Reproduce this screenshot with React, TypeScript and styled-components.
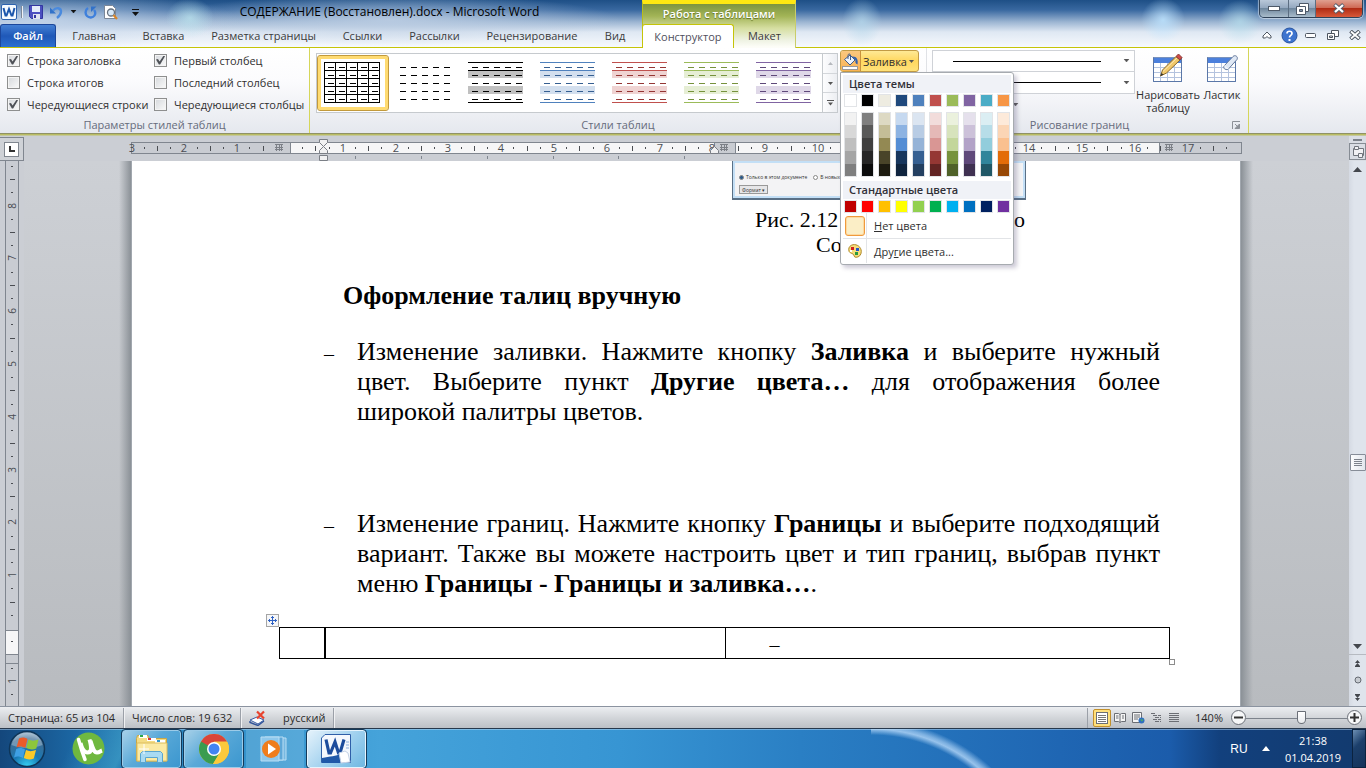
import React from 'react';
import styled, { createGlobalStyle, css } from 'styled-components';

const ui = `"Open Sans", "Noto Sans", sans-serif`;
const serif = `"Liberation Serif", "Times New Roman", serif`;

const Global = createGlobalStyle`
  *, *::before, *::after { box-sizing: border-box; }
  body { margin: 0; font-family: ${ui}; font-size: 11px; color: #303030; }
  button, input, select { font: inherit; color: inherit; margin: 0; padding: 0; border: 0; background: none; }
  svg { display: block; flex: none; }
`;

const App_ = styled.div`
  display: flex;
  flex-direction: column;
  min-height: 100vh;
`;

/* ---------- header ---------- */

const Header = styled.header`
  display: flex;
  height: 48px;
  box-shadow: inset 0 -1px 0 #c5c408;
  background:
    radial-gradient(ellipse 22px 22px at 1163px 20px, rgba(190, 228, 255, 0.85), transparent),
    radial-gradient(ellipse 22px 22px at 1240px 22px, rgba(180, 220, 235, 0.75), transparent),
    radial-gradient(ellipse 20px 24px at 862px 22px, rgba(180, 215, 235, 0.75), transparent),
    radial-gradient(ellipse 24px 20px at 190px 18px, rgba(190, 232, 240, 0.7), transparent),
    radial-gradient(ellipse 230px 26px at 390px 20px, rgba(190, 207, 228, 0.85), transparent),
    radial-gradient(ellipse 200px 30px at 40px 20px, rgba(200, 216, 236, 0.85), transparent),
    linear-gradient(#1e4f86 0, #3968a0 10px, #9cb5d2 22px, #dfe8f3 32px, #f6f9fd 47px);
`;

const HeaderLeft = styled.div`
  width: 642px;
  flex: none;
`;

const TitleRow = styled.div`
  display: flex;
  height: 24px;
`;

const QuickAccess = styled.div`
  display: flex;
  align-items: center;
  gap: 7px;
  width: 137px;
  padding-left: 1px;
`;

const AppMark = styled.span`
  display: flex;
  align-items: center;
  gap: 4px;
`;

const IconButton = styled.button`
  display: flex;
  align-items: center;
  justify-content: center;
`;

const Divider = styled.span`
  width: 1px;
  height: 12px;
  background: #7c8797;
  box-shadow: 1px 0 0 #eef1f5;
`;

const Title = styled.h1`
  flex: 1;
  margin: 0;
  font-size: 12px;
  font-weight: 400;
  line-height: 24px;
  text-align: center;
  color: #000;
`;

const TabRow = styled.nav`
  display: flex;
  height: 23px;
`;

const FileTab = styled.button`
  width: 56px;
  margin-right: 3px;
  border: 1px solid #1c479b;
  border-bottom: 0;
  border-radius: 3px 3px 0 0;
  background: linear-gradient(#4480d4, #1f58b8 50%, #2c6fd0);
  color: #fff;
  font-weight: 600;
  line-height: 22px;
`;

const Tab = styled.button<{ $w: number }>`
  width: ${p => p.$w}px;
  line-height: 24px;
  white-space: nowrap;
  color: #3b3b3b;
`;

const Context = styled.div`
  width: 154px;
  flex: none;
  border-left: 1px solid #b9bd1a;
  border-right: 1px solid #c9cd6a;
  border-top: 4px solid #ffe812;
  background: linear-gradient(#7d9440, #a2b456 12px, #d5dea0 24px, #eef2e2 36px, #fdfdf8 43px);
  background-clip: padding-box;
`;

const ContextTitle = styled.div`
  height: 20px;
  line-height: 20px;
  text-align: center;
  font-weight: 600;
  color: #fff;
  text-shadow: 0 1px 1px #5c6e20;
`;

const ContextTabs = styled.div`
  display: flex;
  height: 24px;
  margin-left: -1px;
`;

const ActiveTab = styled.button`
  width: 93px;
  border: 1px solid #c5c408;
  border-bottom: 0;
  border-radius: 3px 3px 0 0;
  background: #fff;
  line-height: 22px;
  color: #50505c;
`;

const HeaderRight = styled.div`
  flex: 1;
  display: flex;
  flex-direction: column;
  align-items: flex-end;
`;

const WindowButtons = styled.div`
  display: flex;
  height: 18px;
  margin-right: 3px;
  border: 1px solid #2f4258;
  border-top: 0;
  border-radius: 0 0 5px 5px;
  box-shadow: 0 0 1px 1px rgba(255, 255, 255, 0.5);
  overflow: hidden;
`;

const WinButton = styled(IconButton)<{ $w: number; $close?: boolean }>`
  width: ${p => p.$w}px;
  border-right: ${p => (p.$close ? 0 : 1)}px solid #5c6e82;
  background: ${p =>
    p.$close
      ? 'linear-gradient(#e0a08f, #cf6a55 45%, #b02c14 50%, #d8593a)'
      : 'linear-gradient(#b9c8d9, #95a9c0 45%, #70889f 50%, #a9bccb)'};
`;

const HelpRow = styled.div`
  display: flex;
  align-items: center;
  height: 30px;
  padding-top: 4px;
`;

const HelpItem = styled(IconButton)`
  width: 22px;
`;

/* ---------- ribbon ---------- */

const Ribbon = styled.section`
  display: flex;
  height: 86px;
  margin-bottom: 2px;
  background: linear-gradient(#fff, #fbfbfd 40%, #e5e8ee);
  border-bottom: 1px solid #909266;
  box-shadow: 0 1px 0 #b9bc62, 0 2px 0 #c4c79c;
`;

const Group = styled.div<{ $w: number; $accent?: boolean }>`
  display: flex;
  flex-direction: column;
  flex: none;
  width: ${p => p.$w}px;
  border-right: 1px solid ${p => (p.$accent ? '#d5d65a' : '#e0e2e6')};
`;

const GroupBody = styled.div`
  display: flex;
  height: 69px;
`;

const GroupLabel = styled.div`
  display: flex;
  align-items: center;
  height: 16px;
  line-height: 16px;
  color: #666b7c;
  span { flex: 1; text-align: center; }
`;

const Options = styled.div`
  display: grid;
  grid-template-columns: 147px 1fr;
  grid-auto-rows: 22px;
  padding: 1px 0 0 7px;
`;

const Check = styled.label`
  display: flex;
  align-items: center;
  gap: 7px;
  white-space: nowrap;
  input {
    appearance: none;
    display: grid;
    place-items: center;
    width: 13px;
    height: 13px;
    border: 1px solid #8e8f8f;
    background: linear-gradient(135deg, #d5d8dc, #fafafa);
    box-shadow: inset 0 0 0 1px #f4f4f4;
  }
  input:checked::before {
    content: '';
    width: 9px;
    height: 9px;
    background: #4f5258;
    clip-path: polygon(0 45%, 22% 38%, 40% 66%, 85% 0, 100% 8%, 46% 100%, 32% 100%);
  }
`;

const Gallery = styled.div`
  display: flex;
  height: 60px;
  margin: 5px 0 0 6px;
  border: 1px solid #c6cace;
  background: #fff;
`;

const StyleItem = styled.button<{ $on?: boolean }>`
  width: 72px;
  height: 56px;
  margin-top: 1px;
  padding-left: 7px;
  display: grid;
  align-items: center;
  border-radius: 3px;
  ${p =>
    p.$on &&
    css`
      padding-left: 6px;
      border: 1px solid #c29a3c;
      box-shadow: inset 0 0 0 3px #ffdb72;
    `}
`;

const GalleryScroll = styled.div`
  display: flex;
  flex-direction: column;
  width: 15px;
  margin-left: 1px;
  border-left: 1px solid #c6cace;
`;

const GalleryArrow = styled(IconButton)`
  flex: 1;
  background: linear-gradient(90deg, #fdfdfe, #eceef2);
  & + & { border-top: 1px solid #d3d6da; }
`;

const ShadingWrap = styled.div`
  position: relative;
  margin: 2px 0 0 2px;
  height: 22px;
`;

const ShadingButton = styled.button`
  display: flex;
  align-items: center;
  width: 79px;
  height: 22px;
  border: 1px solid #c29b45;
  border-radius: 3px;
  background: linear-gradient(#ffe995, #ffd75f 50%, #ffe27a);
  overflow: hidden;
`;

const ShadingIcon = styled.span`
  display: grid;
  place-items: center;
  width: 20px;
  height: 20px;
  border-right: 1px solid #c9923d;
  background: linear-gradient(#fbc77e, #f9b354);
`;

const ShadingText = styled.span`
  width: 48px;
  white-space: nowrap;
  text-align: center;
`;

const Menu = styled.div`
  position: absolute;
  z-index: 5;
  top: 22px;
  left: 0;
  width: 174px;
  padding: 2px 2px 1px;
  border: 1px solid #a7abb0;
  border-radius: 0 3px 3px 3px;
  background: #fff;
  box-shadow: 3px 3px 4px rgba(90, 80, 120, 0.3);
`;

const MenuHeading = styled.div`
  height: 18px;
  padding-left: 6px;
  background: #f0f2f7;
  font-weight: 600;
  line-height: 18px;
  color: #303038;
`;

const Swatches = styled.div`
  display: flex;
  gap: 4px;
  padding: 1px 0 0 1px;
`;

const Ramps = styled(Swatches)`
  padding: 5px 0 4px 1px;
`;

const Ramp = styled.div`
  border: 1px solid #e2e4e7;
`;

const Swatch = styled.button<{ $c: string; $inRamp?: boolean }>`
  display: block;
  width: ${p => (p.$inRamp ? 11 : 13)}px;
  height: 13px;
  border: ${p => (p.$inRamp ? 0 : 1)}px solid #e2e4e7;
  background: ${p => p.$c};
  &:first-child, &:last-child { height: ${p => (p.$inRamp ? 12 : 13)}px; }
`;

const MenuItem = styled.button`
  display: flex;
  align-items: center;
  width: 100%;
  height: 25px;
  text-align: left;
  & + & { border-top: 1px solid #e2e4e7; }
`;

const MenuIcon = styled.span`
  display: grid;
  place-items: center;
  align-self: stretch;
  width: 24px;
  margin-right: 7px;
  border-right: 1px solid #e2e4e7;
`;

const NoColor = styled.span`
  width: 20px;
  height: 20px;
  border: 1px solid #ef9a3c;
  border-radius: 3px;
  background: #fbeec6;
  box-shadow: inset 0 0 0 1px #fcd9a0;
`;

const BorderCol = styled.div`
  display: flex;
  flex-direction: column;
  width: 203px;
  margin: 2px 0 0 5px;
`;

const LineBox = styled.div`
  display: grid;
  align-items: center;
  height: 22px;
  border: 1px solid #cfd2d7;
  background: #fff;
  & + & { border-top: 0; }
  > * { grid-area: 1 / 1; }
  > svg { justify-self: end; margin-right: 4px; pointer-events: none; }
`;

const LineSelect = styled.select`
  appearance: none;
  width: 100%;
  height: 20px;
`;

const LineSample = styled.span`
  justify-self: start;
  width: 148px;
  height: 1px;
  margin-left: 20px;
  background: #000;
  pointer-events: none;
`;

const PenColor = styled.div`
  padding: 9px 0 0 80px;
`;

const BigButton = styled.button<{ $w: number }>`
  display: flex;
  flex-direction: column;
  align-items: center;
  align-self: flex-start;
  width: ${p => p.$w}px;
  padding-top: 6px;
  line-height: 13px;
  svg { margin-bottom: 6px; }
`;

/* ---------- workspace ---------- */

const Workspace = styled.main`
  flex: 1;
  display: grid;
  grid-template-columns: 24px 1fr 17px;
  grid-template-rows: 25px 1fr;
  background: #cbced4;
`;

const Corner = styled.button`
  display: grid;
  place-items: center;
  border: 1px solid #80868f;
  border-left: 0;
  margin: 1px 0 0;
  background: #cfd2d7;
  span {
    display: grid;
    place-items: center;
    width: 15px;
    height: 15px;
    border: 1px solid #80868f;
    background: #fff;
  }
`;

const HRulerCell = styled.div`
  padding-left: 107px;
  overflow: hidden;
  svg { overflow: visible; }
`;

const VRulerCell = styled.div`
  padding-left: 5px;
  overflow: hidden;
`;

const Desk = styled.div`
  display: flex;
  padding: 0 109px 0 108px;
  background: linear-gradient(#cdd0d5, #b8bbbf);
`;

const Page = styled.article`
  position: relative;
  flex: 1;
  padding: 0 80px 0 192px;
  background: #fff;
  font-family: ${serif};
  font-size: 26px;
  line-height: 30px;
  color: #000;
  box-shadow: -1px 0 0 #a1a7ae, 1px 0 0 #a1a7ae;
  &::before, &::after {
    content: '';
    position: absolute;
    top: 0;
    bottom: 0;
    width: 12px;
  }
  &::before { right: calc(100% + 1px); background: linear-gradient(90deg, transparent, #8b9197); }
  &::after { left: calc(100% + 1px); background: linear-gradient(270deg, transparent, #8b9197); }
`;

const Figure = styled.div`
  display: flex;
  flex-direction: column;
  gap: 4px;
  width: 294px;
  height: 39px;
  margin-left: 408px;
  padding: 12px 0 0 6px;
  border: solid #5a7086;
  border-width: 0 1px 2px 1px;
  box-shadow: inset 0 0 0 2px #c3dff6;
  background: #f3f3f5;
  font-family: ${ui};
  font-size: 5px;
  line-height: 8px;
  color: #333;
`;

const FigureRow = styled.div`
  display: flex;
  gap: 6px;
  label { display: flex; align-items: center; gap: 2px; white-space: nowrap; }
  input { appearance: none; width: 5px; height: 5px; border: 1px solid #888; border-radius: 50%; background: #fff; }
  input:checked { background: #2a5a8a; }
`;

const FigureButton = styled.button`
  width: 29px;
  height: 9px;
  border: 1px solid #999;
  background: #e6e6e8;
  line-height: 6px;
  white-space: nowrap;
`;

const Caption = styled.p<{ $indent: number }>`
  display: flex;
  justify-content: space-between;
  width: 270px;
  margin: 0 0 0 431px;
  padding-left: ${p => p.$indent}px;
  font-size: 22px;
  line-height: 25px;
`;

const Captions = styled.div`
  padding-top: 7px;
`;

const Heading = styled.h2`
  margin: 24px 0 26px 19px;
  font-size: 26px;
  line-height: 30px;
`;

const List = styled.ul`
  display: flex;
  flex-direction: column;
  gap: 82px;
  margin: 0;
  padding: 0;
  list-style: none;
`;

const Item = styled.li`
  display: flex;
  &::before {
    content: '–';
    width: 33px;
    flex: none;
    font-size: 20px;
    line-height: 34px;
  }
  p { margin: 0; text-align: justify; }
`;

const TableBox = styled.div`
  position: relative;
  margin: 28px -10px 0 -45px;
`;

const Grid = styled.table`
  width: 100%;
  table-layout: fixed;
  border-collapse: collapse;
  td { height: 30px; padding: 4px 0 0 44px; border: 1px solid #000; font-size: 20px; line-height: 26px; }
  td:first-child { width: 45px; border-right-width: 2px; }
  td:nth-child(2) { width: 400px; }
`;

const MoveHandle = styled.button`
  position: absolute;
  left: -13px;
  top: -13px;
  width: 13px;
  height: 13px;
  border: 1px solid #a5a5a5;
  background: #f5f6f8;
`;

const SizeHandle = styled.span`
  position: absolute;
  right: -5px;
  bottom: -6px;
  width: 6px;
  height: 6px;
  border: 1px solid #8c8c8c;
  background: #fff;
`;

const ScrollTop = styled.div`
  display: flex;
  flex-direction: column;
  align-items: center;
  gap: 2px;
  padding-top: 3px;
  background: #d9dde4;
`;

const SplitBar = styled.span`
  width: 9px;
  height: 2px;
  background: #7c828b;
`;

const RulerToggle = styled(IconButton)`
  width: 17px;
  height: 17px;
  border: 1px solid #868c94;
`;

const ScrollBar = styled.div`
  display: flex;
  flex-direction: column;
  align-items: center;
  background: linear-gradient(90deg, #d5dae3, #dfe4ec 30%, #dfe4ec);
`;

const ScrollArrow = styled(IconButton)<{ $h: number; $line?: boolean }>`
  width: 17px;
  height: ${p => p.$h}px;
  border-top: ${p => (p.$line ? 1 : 0)}px solid #b6bac1;
`;

const Track = styled.div<{ $grow: number }>`
  flex: ${p => p.$grow} 1 0;
`;

const Thumb = styled(IconButton)`
  width: 16px;
  height: 17px;
  border: 1px solid #878d98;
  border-radius: 1px;
  background: linear-gradient(90deg, #fdfdfe, #e2e6ed);
`;

/* ---------- status bar ---------- */

const Status = styled.footer`
  display: flex;
  align-items: center;
  height: 22px;
  border-top: 1px solid #8b93a0;
  background: linear-gradient(#eceef1, #d3d6da 50%, #bcc0c6);
  color: #2b2b2b;
`;

const StatusCell = styled.button<{ $w: number }>`
  display: flex;
  align-items: center;
  gap: 17px;
  width: ${p => p.$w}px;
  height: 20px;
  padding-left: 8px;
  border-right: 1px solid #9ba0a8;
  box-shadow: 1px 0 0 #f0f1f3;
  white-space: nowrap;
`;

const StatusRight = styled.div`
  display: flex;
  align-items: center;
  height: 20px;
  margin-left: auto;
  padding: 0 4px 0 5px;
  border-left: 1px solid #9ba0a8;
`;

const ViewButton = styled(IconButton)<{ $on?: boolean }>`
  width: 18px;
  height: 18px;
  ${p =>
    p.$on &&
    css`
      border: 1px solid #c2902c;
      border-radius: 2px;
      background: #ffe07c;
    `}
`;

const ZoomLabel = styled.button`
  width: 28px;
  margin: 0 8px 0 12px;
`;

const RoundButton = styled(IconButton)`
  width: 15px;
  height: 15px;
  border: 1px solid #6a6f77;
  border-radius: 50%;
  background: #f6f7f8;
`;

const ZoomRange = styled.input`
  appearance: none;
  width: 101px;
  height: 14px;
  background: linear-gradient(#7d838c, #7d838c) 0 7px / 100% 1px no-repeat;
  &::-webkit-slider-thumb {
    appearance: none;
    width: 9px;
    height: 13px;
    background: linear-gradient(#fff, #e9ebee);
    border: 1px solid #6a6f77;
    border-radius: 1px 1px 5px 5px;
  }
`;

/* ---------- taskbar ---------- */

const Taskbar = styled.footer`
  display: flex;
  align-items: center;
  height: 40px;
  border-top: 1px solid #27384c;
  box-shadow: inset 0 1px 0 rgba(190, 220, 245, 0.5);
  background:
    radial-gradient(circle at 0 168px, transparent 162px, rgba(180, 215, 248, 0.8) 168px, rgba(180, 215, 248, 0.6) 171px, transparent 177px) 871px 0 / 180px 40px no-repeat,
    linear-gradient(115deg, transparent 70px, rgba(90, 200, 220, 0.35) 120px, transparent 130px),
    linear-gradient(90deg, #14477c, #1c69a6 80px, #2f8cc6 200px, #45a3da 380px, #3795d3 620px, #2a7fc4 800px, #1f66b3 1060px, #1b5cab 1170px, #12407d 1220px, #123a6e 1366px);
`;

const Orb = styled(IconButton)`
  width: 57px;
  padding-right: 3px;
`;

const TaskButton = styled(IconButton)<{ $w: number; $mode: 'idle' | 'open' | 'active' | 'plain' }>`
  width: ${p => p.$w}px;
  height: 38px;
  margin-right: 3px;
  ${p =>
    (p.$mode === 'open' || p.$mode === 'active') &&
    css`
      border: 1px solid ${p.$mode === 'active' ? '#e6f4fd' : '#9ccbe8'};
      border-radius: 3px;
      outline: 1px solid #143a5a;
      background: ${p.$mode === 'active'
        ? 'linear-gradient(135deg, #e4f2fb, #9fd0ee 55%, #6fb8e2)'
        : 'linear-gradient(135deg, #a6d0e8, #5aa9d8 45%, #3c97cf)'};
    `}
  ${p => p.$mode === 'idle' && css`background: rgba(150, 205, 235, 0.3);`}
`;

const Tray = styled.div`
  display: flex;
  align-items: center;
  align-self: stretch;
  margin-left: auto;
  color: #fff;
`;

const Lang = styled.button`
  width: 38px;
  font-family: "Liberation Sans", sans-serif;
  font-size: 12px;
`;

const Clock = styled.button`
  width: 78px;
  line-height: 17px;
  text-align: center;
`;

const ShowDesktop = styled.button`
  align-self: stretch;
  width: 14px;
  border: 1px solid #0b2340;
  background: linear-gradient(135deg, #6d8fb3, #1c3f6b 40%, #14325a);
`;

/* ---------- drawings ---------- */

const Down = ({ c = '#555' }: { c?: string }) => (
  <svg width="7" height="4"><path d="M1 0h5L3.500 3z" fill={c} stroke={c} strokeWidth=".5" /></svg>
);

const WordSmall = () => (
  <svg width="16" height="16" viewBox="0 0 16 16">
    <rect x=".5" y=".5" width="15" height="15" rx="1.500" fill="#f5faff" stroke="#2c62ae" />
    <path d="M2.500 4l2 7.500h1L8 5l2.500 6.500h1l2-7.500" fill="none" stroke="#1b56ac" strokeWidth="2" />
  </svg>
);

const SaveIcon = () => (
  <svg width="14" height="14" viewBox="0 0 14 14">
    <path d="M.5.5h13v13h-11l-2-2z" fill="#4b4fc0" stroke="#3236a0" />
    <rect x="3" y="1" width="8" height="6" fill="#e3ecfa" />
    <rect x="4" y="9" width="7" height="5" fill="#dfe3f0" />
    <rect x="5" y="10" width="2" height="3" fill="#3236a0" />
  </svg>
);

const UndoIcon = () => (
  <svg width="13" height="13" viewBox="0 0 13 13">
    <path d="M0 1.500v6h6z" fill="#3272c9" />
    <path d="M3 4.500C6 1 11 1.500 11 5.500c0 3-1.500 4.500-4 6.500" fill="none" stroke="#4a8ade" strokeWidth="2.400" />
  </svg>
);

const RedoIcon = () => (
  <svg width="13" height="13" viewBox="0 0 13 13">
    <path d="M4 2C1 4 1 8 3 10s6 2 7.500-.5.800-4-.5-5.500" fill="none" stroke="#3f80dc" strokeWidth="2.400" />
    <path d="M12.500 .5H7v5.500z" fill="#3272c9" />
  </svg>
);

const PreviewIcon = () => (
  <svg width="14" height="15" viewBox="0 0 14 15">
    <path d="M.5.5h8l3 3v10H.5z" fill="#fff" stroke="#7b8798" />
    <circle cx="7" cy="7.500" r="3.500" fill="#d6e8f8" stroke="#66717f" strokeWidth="1.300" />
    <path d="M9.500 10l3.500 4" stroke="#d8862a" strokeWidth="2.200" />
  </svg>
);

const BucketIcon = () => (
  <svg width="17" height="17" viewBox="0 0 17 17">
    <path d="M2.500 6.500l5.500-4.500 5 5-5 5z" fill="#eef4fc" stroke="#3f5b8a" />
    <path d="M6 6V2.500C6 .5 8.500.5 8.500 2.500V7" fill="none" stroke="#3f5b8a" />
    <path d="M10 3.500c4.500-.5 6.500 3 5.500 8-2-1-2.500-2.500-2-4.500z" fill="#2f5fae" />
    <rect x=".5" y="13.500" width="15" height="3" fill="#fff" stroke="#9a9a9a" />
  </svg>
);

const PaletteIcon = () => (
  <svg width="14" height="14" viewBox="0 0 14 14">
    <path d="M5 .7C9 0 13.300 3 13.300 7.500 13.300 11 11 13.300 8 13.300c-2.500 0-1.500-2.500-3-3.300S.7 9 .7 5.500C.7 3 2.500 1.200 5 .7z" fill="#f6dd7c" stroke="#b08a2c" />
    <rect x="3" y="3" width="3" height="3" fill="#d02020" />
    <rect x="8" y="4" width="3" height="3" fill="#2456c8" />
    <rect x="7" y="8" width="3" height="3" fill="#2a9a3a" />
    <rect x="2" y="6" width="2" height="2" fill="#fff" />
  </svg>
);

const TableBase = () => (
  <>
    <rect x=".5" y="3.500" width="28" height="24" fill="#fff" stroke="#7a93bd" />
    <rect x="1" y="4" width="27" height="5" fill="#4c80dc" />
    <path d="M1 13.500h27M1 18.500h27M1 23.500h27M7.500 9v18M14.500 9v18M21.500 9v18" stroke="#b4c3de" />
    <path d="M.5 3.500v24h28v-24" fill="none" stroke="#5a77a8" />
  </>
);

const DrawTableIcon = () => (
  <svg width="30" height="28" viewBox="0 0 30 28">
    <TableBase />
    <path d="M7.500 22l2-6L23 2.500l4 3.500-13.500 13z" fill="#f2c96b" stroke="#8a6a2c" />
    <path d="M23 2.500L25.500 0l3.500 3.500-2 2.500z" fill="#cf4a44" stroke="#8c3d38" />
    <path d="M7.500 22l1-3 2 1.500z" fill="#333" />
    <path d="M10 17.500L24 4" stroke="#fbe9b6" />
  </svg>
);

const EraserIcon = () => (
  <svg width="31" height="28" viewBox="0 0 31 28">
    <TableBase />
    <path d="M17 12l9-9.500c2-2 5.500 0 4 3L21 15.500c-3 .5-5-1-4-3.500z" fill="#dfe8f5" stroke="#62779a" />
    <path d="M17.500 11.500c1 2 2 3 4 3.500" fill="none" stroke="#fff" />
  </svg>
);

type ThumbStyle = { kind: 'grid' | 'plain' | 'band'; line: string; band: string; dash: string };

const styleThumbs: ThumbStyle[] = [
  { kind: 'grid', line: '#000', band: '', dash: '#000' },
  { kind: 'plain', line: '', band: '', dash: '#000' },
  { kind: 'band', line: '#000', band: '#c0c0c0', dash: '#000' },
  { kind: 'band', line: '#4f81bd', band: '#d3dfee', dash: '#365f91' },
  { kind: 'band', line: '#c0504d', band: '#efd3d2', dash: '#943634' },
  { kind: 'band', line: '#9bbb59', band: '#e6eed5', dash: '#76923c' },
  { kind: 'band', line: '#8064a2', band: '#dfd8e8', dash: '#5f497a' },
];

const five = [0, 1, 2, 3, 4];

const StyleThumb = ({ t }: { t: ThumbStyle }) => (
  <svg width="56" height="42" shapeRendering="crispEdges">
    {t.kind === 'band' && (
      <>
        <rect y="9" width="55" height="7" fill={t.band} />
        <rect y="24" width="55" height="8" fill={t.band} />
        {[0, 8, 40].map(y => <rect key={y} y={y} width="55" height="1" fill={t.line} />)}
      </>
    )}
    {t.kind === 'grid' &&
      [0, 1, 2, 3, 4, 5].map(i => (
        <React.Fragment key={i}>
          <rect x={i * 11} width="1" height="41" fill={t.line} />
          <rect y={i * 8} width="56" height="1" fill={t.line} />
        </React.Fragment>
      ))}
    {five.map(r => five.map(c => <rect key={`${r}${c}`} x={4 + c * 11} y={5 + r * 8} width="6" height="1" fill={t.dash} />))}
  </svg>
);

const TICK = 13.2;

const HashMark = ({ x }: { x: number }) => (
  <path d={`M${x} 8.500h8M${x} 11.500h8M${x} 13.500h8M${x + 1.5} 8v7M${x + 4.500} 8v7M${x + 6.500} 8v7`} stroke="#7c8087" />
);

const HorizontalRuler = () => {
  const origin = 159;
  const marks = [];
  for (let q = -12; q <= 71; q++) {
    const x = Math.round(origin + q * TICK);
    if (q === 0 || q === -1 || (x > 585 && x < 603) || (x > 1030 && x < 1046) || x > 1105) continue;
    if (q % 4 === 0) {
      marks.push(
        <text key={q} x={x} y="16" textAnchor="middle" fontSize="11" fontFamily={ui} fill="#4a4d52">{Math.abs(q / 4)}</text>,
      );
    } else {
      const half = q % 2 === 0;
      marks.push(<rect key={q} x={x - 1} y={half ? 10 : 11} width="1" height={half ? 5 : 2} fill="#4a4d52" />);
    }
  }
  return (
    <svg width="1112" height="25" shapeRendering="crispEdges">
      <rect x=".5" y="6.500" width="1110" height="11" fill="#c9ccd2" stroke="#80868f" />
      <rect x="160" y="7" width="424" height="10" fill="#f6f6f7" />
      <rect x="605" y="7" width="424" height="10" fill="#f6f6f7" />
      <path d="M159.500 6v12M583.500 6v12M604.500 6v12M1028.500 6v12" stroke="#80868f" />
      {marks}
      <HashMark x={144} />
      <HashMark x={589} />
      <HashMark x={1034} />
      {[224, 290, 356, 422, 487, 553].map(x => <rect key={x} x={x} y="20" width="1" height="3" fill="#80868f" />)}
      <g shapeRendering="auto" fill="#f1f1f2" stroke="#7b7f86">
        <path d="M188.500 3.500h8v3l-4 4-4-4z" />
        <path d="M192.500 10.500l4 4v3h-8v-3z" />
        <path d="M188.500 19.500h8v5h-8z" />
        <path d="M583.500 10.500l4 4v3h-8v-3z" />
      </g>
    </svg>
  );
};

const VerticalRuler = () => {
  const origin = 467;
  const marks = [];
  for (let q = -35; q <= 5; q++) {
    const y = Math.round(origin + q * TICK);
    if (q === 0 || q === 2) continue;
    if (q % 4 === 0) {
      marks.push(
        <text key={q} transform={`translate(11 ${y}) rotate(-90)`} textAnchor="middle" fontSize="10" fontFamily={ui} fill="#4a4d52">
          {Math.abs(q / 4)}
        </text>,
      );
    } else {
      const half = q % 2 === 0;
      marks.push(<rect key={q} x={half ? 5 : 6} y={y} width={half ? 5 : 2} height="1" fill="#4a4d52" />);
    }
  }
  return (
    <svg width="14" height="545" shapeRendering="crispEdges">
      <rect width="14" height="545" fill="#c9ccd2" />
      <rect y="470" width="14" height="24" fill="#f6f6f7" />
      <path d="M.5 0v545M13.500 0v545M0 469.500h14M0 493.500h14M0 502.500h14" stroke="#80868f" />
      {marks}
    </svg>
  );
};

/* ---------- data ---------- */

const tabs: [string, number][] = [
  ['Главная', 70], ['Вставка', 69], ['Разметка страницы', 131], ['Ссылки', 67],
  ['Рассылки', 77], ['Рецензирование', 118], ['Вид', 48],
];

const options: [string, boolean][] = [
  ['Строка заголовка', true], ['Первый столбец', true],
  ['Строка итогов', false], ['Последний столбец', false],
  ['Чередующиеся строки', true], ['Чередующиеся столбцы', false],
];

const theme = ['#ffffff', '#000000', '#eeece1', '#1f497d', '#4f81bd', '#c0504d', '#9bbb59', '#8064a2', '#4bacc6', '#f79646'];
const ramps = [
  ['#f2f2f2', '#d8d8d8', '#bfbfbf', '#a5a5a5', '#7f7f7f'],
  ['#7f7f7f', '#595959', '#3f3f3f', '#262626', '#0c0c0c'],
  ['#ddd9c3', '#c4bd97', '#938953', '#494429', '#1d1b10'],
  ['#c6d9f0', '#8db3e2', '#548dd4', '#17365d', '#0f243e'],
  ['#dbe5f1', '#b8cce4', '#95b3d7', '#366092', '#244061'],
  ['#f2dcdb', '#e5b9b7', '#d99694', '#953734', '#632423'],
  ['#ebf1dd', '#d7e3bc', '#c3d69b', '#76923c', '#4f6128'],
  ['#e5e0ec', '#ccc1d9', '#b2a2c7', '#5f497a', '#3f3151'],
  ['#dbeef3', '#b7dde8', '#92cddc', '#31859b', '#205867'],
  ['#fdeada', '#fbd5b5', '#fac08f', '#e36c09', '#974806'],
];
const standard = ['#c00000', '#ff0000', '#ffc000', '#ffff00', '#92d050', '#00b050', '#00b0f0', '#0070c0', '#002060', '#7030a0'];

/* ---------- sections ---------- */

const WindowHeader = () => (
  <Header>
    <HeaderLeft>
      <TitleRow>
        <QuickAccess>
          <AppMark><WordSmall /><Divider /></AppMark>
          <IconButton aria-label="Сохранить"><SaveIcon /></IconButton>
          <IconButton aria-label="Отменить"><UndoIcon /></IconButton>
          <Down c="#111" />
          <IconButton aria-label="Повторить"><RedoIcon /></IconButton>
          <IconButton aria-label="Просмотр"><PreviewIcon /></IconButton>
          <Divider />
          <IconButton aria-label="Настройка панели">
            <svg width="7" height="7"><path d="M0 .5h7" stroke="#111" /><path d="M0 3h7L3.500 7z" fill="#111" /></svg>
          </IconButton>
        </QuickAccess>
        <Title>СОДЕРЖАНИЕ (Восстановлен).docx - Microsoft Word</Title>
      </TitleRow>
      <TabRow>
        <FileTab>Файл</FileTab>
        {tabs.map(([name, w]) => <Tab key={name} $w={w}>{name}</Tab>)}
      </TabRow>
    </HeaderLeft>
    <Context>
      <ContextTitle>Работа с таблицами</ContextTitle>
      <ContextTabs>
        <ActiveTab>Конструктор</ActiveTab>
        <Tab $w={62}>Макет</Tab>
      </ContextTabs>
    </Context>
    <HeaderRight>
      <WindowButtons>
        <WinButton $w={29} aria-label="Свернуть">
          <svg width="12" height="5"><rect x=".5" y=".5" width="11" height="4" fill="#fff" stroke="#4d5968" /></svg>
        </WinButton>
        <WinButton $w={27} aria-label="Восстановить">
          <svg width="13" height="12" fill="#fff" stroke="#4d5968">
            <path d="M3.500.5h9v8h-9z" /><path d="M.5 3.500h9v8h-9z" /><path d="M3.500 6.500h3v2h-3z" fill="#8093aa" />
          </svg>
        </WinButton>
        <WinButton $w={46} $close aria-label="Закрыть">
          <svg width="12" height="11"><path d="M1.500 1.500l9 8M10.500 1.500l-9 8" stroke="#59606e" strokeWidth="4" /><path d="M2 2l8 7M10 2L2 9" stroke="#fff" strokeWidth="2.200" /></svg>
        </WinButton>
      </WindowButtons>
      <HelpRow>
        <HelpItem aria-label="Свернуть ленту">
          <svg width="10" height="8" fill="#fff" stroke="#4d5560"><path d="M1 5l4-4 4 4v2H6.500L5 5.500 3.500 7H1z" /></svg>
        </HelpItem>
        <HelpItem aria-label="Справка">
          <svg width="17" height="17">
            <circle cx="8.500" cy="8.500" r="7.500" fill="#3d74cf" stroke="#2a559f" />
            <path d="M6 6.500c0-3 5-3 5 0 0 2-2.500 1.800-2.500 4" fill="none" stroke="#fff" strokeWidth="1.700" />
            <rect x="7.500" y="12" width="2" height="2" fill="#fff" />
          </svg>
        </HelpItem>
        <HelpItem aria-label="Свернуть окно">
          <svg width="12" height="5"><rect x=".5" y=".5" width="10" height="4" rx="1" fill="#fff" stroke="#4d5560" /></svg>
        </HelpItem>
        <HelpItem aria-label="Восстановить окно">
          <svg width="12" height="11" fill="#fff" stroke="#4d5560"><path d="M4.500.5h7v6h-7z" /><path d="M.5 3.500h7v6h-7z" /><path d="M2.500 6h3v1.500h-3z" /></svg>
        </HelpItem>
        <HelpItem aria-label="Закрыть окно">
          <svg width="12" height="10"><path d="M1.500 1l9 8M10.500 1l-9 8" stroke="#4d5560" strokeWidth="3.800" /><path d="M2 1.500l8 7M10 1.500l-8 7" stroke="#fff" strokeWidth="1.800" /></svg>
        </HelpItem>
      </HelpRow>
    </HeaderRight>
  </Header>
);

const ShadingMenu = () => (
  <Menu>
    <MenuHeading>Цвета темы</MenuHeading>
    <Swatches>{theme.map(c => <Swatch key={c} $c={c} aria-label={c} />)}</Swatches>
    <Ramps>
      {ramps.map((ramp, i) => (
        <Ramp key={i}>{ramp.map(c => <Swatch key={c} $c={c} $inRamp aria-label={c} />)}</Ramp>
      ))}
    </Ramps>
    <MenuHeading>Стандартные цвета</MenuHeading>
    <Swatches>{standard.map(c => <Swatch key={c} $c={c} aria-label={c} />)}</Swatches>
    <MenuItem><MenuIcon><NoColor /></MenuIcon><span><u>Н</u>ет цвета</span></MenuItem>
    <MenuItem><MenuIcon><PaletteIcon /></MenuIcon><span>Дру<u>г</u>ие цвета...</span></MenuItem>
  </Menu>
);

const RibbonBar = () => (
  <Ribbon>
    <Group $w={310} $accent>
      <GroupBody>
        <Options>
          {options.map(([name, on]) => (
            <Check key={name}><input type="checkbox" defaultChecked={on} />{name}</Check>
          ))}
        </Options>
      </GroupBody>
      <GroupLabel><span>Параметры стилей таблиц</span></GroupLabel>
    </Group>
    <Group $w={617}>
      <GroupBody>
        <Gallery>
          {styleThumbs.map((t, i) => (
            <StyleItem key={i} $on={i === 0} aria-label={`Стиль ${i + 1}`}><StyleThumb t={t} /></StyleItem>
          ))}
          <GalleryScroll>
            <GalleryArrow aria-label="Вверх"><svg width="5" height="3"><path d="M0 3h5L2.500 0z" fill="#b5b8bd" /></svg></GalleryArrow>
            <GalleryArrow aria-label="Вниз"><svg width="5" height="3"><path d="M0 0h5L2.500 3z" fill="#555" /></svg></GalleryArrow>
            <GalleryArrow aria-label="Все стили"><svg width="7" height="6"><path d="M0 .5h7" stroke="#555" /><path d="M1 2.500h5L3.500 5.500z" fill="#555" /></svg></GalleryArrow>
          </GalleryScroll>
        </Gallery>
        <ShadingWrap>
          <ShadingButton>
            <ShadingIcon><BucketIcon /></ShadingIcon>
            <ShadingText>Заливка</ShadingText>
            <svg width="5" height="3"><path d="M0 0h5L2.500 3z" fill="#555" /></svg>
          </ShadingButton>
          <ShadingMenu />
        </ShadingWrap>
      </GroupBody>
      <GroupLabel><span>Стили таблиц</span></GroupLabel>
    </Group>
    <Group $w={322} $accent>
      <GroupBody>
        <BorderCol>
          <LineBox><LineSelect aria-label="Стиль пера" /><LineSample /><Down /></LineBox>
          <LineBox><LineSelect aria-label="Толщина пера" /><LineSample /><Down /></LineBox>
          <PenColor><Down /></PenColor>
        </BorderCol>
        <BigButton $w={66}><DrawTableIcon />Нарисовать таблицу</BigButton>
        <BigButton $w={42}><EraserIcon />Ластик</BigButton>
      </GroupBody>
      <GroupLabel>
        <span>Рисование границ</span>
        <svg width="16" height="9"><path d="M.5 8V.5H8" fill="none" stroke="#8c9097" /><path d="M3 3l3 3M7.500 3v4.500H3z" stroke="#8c9097" fill="#8c9097" /></svg>
      </GroupLabel>
    </Group>
  </Ribbon>
);

const Document = () => (
  <Page>
    <Figure>
      <FigureRow>
        <label><input type="radio" name="scope" defaultChecked />Только в этом документе</label>
        <label><input type="radio" name="scope" />В новых документах</label>
      </FigureRow>
      <FigureButton>Формат ▾</FigureButton>
    </Figure>
    <Captions>
      <Caption $indent={0}><span>Рис. 2.12</span><span>о</span></Caption>
      <Caption $indent={61}><span>Со</span></Caption>
    </Captions>
    <Heading>Оформление талиц вручную</Heading>
    <List>
      <Item>
        <p>Изменение заливки. Нажмите кнопку <b>Заливка</b> и выберите нужный цвет. Выберите пункт <b>Другие цвета…</b> для отображения более широкой{'\u00a0'}палитры цветов.</p>
      </Item>
      <Item>
        <p>Изменение границ. Нажмите кнопку <b>Границы</b> и выберите подходящий вариант. Также вы можете настроить цвет и тип границ, выбрав пункт меню <b>Границы - Границы и заливка…</b>.</p>
      </Item>
    </List>
    <TableBox>
      <Grid><tbody><tr><td /><td /><td>–</td></tr></tbody></Grid>
      <MoveHandle aria-label="Переместить таблицу">
        <svg width="11" height="11" shapeRendering="crispEdges">
          <path d="M5.500 1v9M1 5.500h9M4 2.500h3M4 8.500h3M2.500 4v3M8.500 4v3" stroke="#2f62c4" />
        </svg>
      </MoveHandle>
      <SizeHandle />
    </TableBox>
  </Page>
);

const VerticalScroll = () => (
  <ScrollBar>
    <ScrollArrow $h={17} aria-label="Вверх"><svg width="9" height="5"><path d="M0 5h9L4.500 0z" fill="#44474d" /></svg></ScrollArrow>
    <Track $grow={276} />
    <Thumb aria-label="Полоса прокрутки">
      <svg width="8" height="8" shapeRendering="crispEdges"><path d="M0 .5h8M0 2.500h8M0 4.500h8M0 6.500h8" stroke="#7d828b" /></svg>
    </Thumb>
    <Track $grow={167} />
    <ScrollArrow $h={16} aria-label="Вниз"><svg width="9" height="5"><path d="M0 0h9L4.500 5z" fill="#44474d" /></svg></ScrollArrow>
    <ScrollArrow $h={17} $line aria-label="Предыдущая страница">
      <svg width="5" height="7"><path d="M2.500 0L5 3H0zM2.500 3L5 6H0z" fill="#44474d" /><path d="M0 6.500h5" stroke="#44474d" /></svg>
    </ScrollArrow>
    <ScrollArrow $h={17} aria-label="Объект перехода"><svg width="8" height="8"><circle cx="4" cy="4" r="3" fill="#c7cbd1" stroke="#666b73" /></svg></ScrollArrow>
    <ScrollArrow $h={18} aria-label="Следующая страница">
      <svg width="5" height="7"><path d="M2.500 7L5 4H0zM2.500 4L5 1H0z" fill="#44474d" /><path d="M0 .5h5" stroke="#44474d" /></svg>
    </ScrollArrow>
  </ScrollBar>
);

const StatusBar = () => (
  <Status>
    <StatusCell $w={124}>Страница: 65 из 104</StatusCell>
    <StatusCell $w={117}>Число слов: 19 632</StatusCell>
    <StatusCell $w={93}>
      <svg width="17" height="16" viewBox="0 0 17 16">
        <path d="M1 10l7-3 7 3-6 4z" fill="#fff" stroke="#3a5fa8" />
        <path d="M1 11v1.500l8 3 6-4.500" fill="none" stroke="#2f529a" strokeWidth="1.400" />
        <path d="M8 1.500l7 7M15 1.500l-7 7" stroke="#e8432e" strokeWidth="2.200" />
      </svg>
      русский
    </StatusCell>
    <StatusRight>
      <ViewButton $on aria-label="Разметка страницы">
        <svg width="12" height="12"><rect x=".5" y=".5" width="11" height="11" fill="#fff" stroke="#6b6e74" /><path d="M2 3.500h8M2 5.500h8M2 7.500h8M2 9.500h8" stroke="#777" /></svg>
      </ViewButton>
      <ViewButton aria-label="Режим чтения">
        <svg width="12" height="11" fill="#f5f5f5" stroke="#6b6e74"><path d="M.5 1.500h4l1.500 1 1.500-1h4v8h-4l-1.500 1-1.500-1h-4zM6 2.500v8M2 4h2.500M2 6h2.500M8 4h2M8 6h2" /></svg>
      </ViewButton>
      <ViewButton aria-label="Веб-документ">
        <svg width="13" height="12"><path d="M.5.500h9v10h-9z" fill="#f5f5f5" stroke="#6b6e74" /><path d="M2 3h6M2 5h6M2 7h4" stroke="#6b6e74" /><circle cx="9.500" cy="8.500" r="3" fill="#2f6fc0" /><path d="M8 7.500l2 2 1.500-2z" fill="#4fb05a" /></svg>
      </ViewButton>
      <ViewButton aria-label="Структура">
        <svg width="10" height="10"><path d="M0 .5h5M2 2.500h8M4 4.500h6M2 6.500h8M4 8.500h6" stroke="#6b6e74" strokeDasharray="4 1" /></svg>
      </ViewButton>
      <ViewButton aria-label="Черновик">
        <svg width="10" height="10"><path d="M0 .5h10M0 2.500h10M0 4.500h10M0 6.500h10M0 8.500h10" stroke="#6b6e74" /></svg>
      </ViewButton>
      <ZoomLabel>140%</ZoomLabel>
      <RoundButton aria-label="Уменьшить"><svg width="9" height="9"><path d="M0 4.500h9" stroke="#333" strokeWidth="2" /></svg></RoundButton>
      <ZoomRange type="range" aria-label="Масштаб" min={0} max={100} defaultValue={55} />
      <RoundButton aria-label="Увеличить"><svg width="9" height="9"><path d="M0 4.500h9M4.500 0v9" stroke="#333" strokeWidth="2" /></svg></RoundButton>
    </StatusRight>
  </Status>
);

const StartOrb = () => (
  <svg width="38" height="38" viewBox="0 0 38 38">
    <defs>
      <radialGradient id="orb" cx=".5" cy="1" r="1">
        <stop offset="0" stopColor="#37d3f5" />
        <stop offset=".4" stopColor="#1878b4" />
        <stop offset=".8" stopColor="#3f6c92" />
        <stop offset="1" stopColor="#a8bfd2" />
      </radialGradient>
    </defs>
    <circle cx="19" cy="19" r="17.500" fill="url(#orb)" stroke="#0e3558" strokeWidth="1.500" />
    <path d="M3.500 15C6 5 13 3 19 3s13 2 15.500 12C25 19 13 19 3.500 15z" fill="#dce8f2" opacity=".35" />
    <path d="M11 8.500c3.500-1.500 6-1 8.500.5l-2.200 9c-3-1.500-5.500-2-8.800-.5z" fill="#ea5b2a" />
    <path d="M20.500 9.500c3 1.500 6 1.500 10 0l-2.200 9c-3.500 1.500-7 1-10-.5z" fill="#8cc63c" />
    <path d="M8.200 19c3.500-1.500 6-1 8.800.5l-2.200 8.500c-3-1.500-5.500-2-8.800-.5z" fill="#3fa0e4" />
    <path d="M18 20c3 1.500 6 1.500 10 0l-2.200 8.500c-3.500 1.500-7 1-10-.5z" fill="#fbc928" />
  </svg>
);

const TaskbarRow = () => (
  <Taskbar>
    <Orb aria-label="Пуск"><StartOrb /></Orb>
    <TaskButton $w={62} $mode="plain" aria-label="uTorrent">
      <svg width="33" height="33" viewBox="0 0 33 33">
        <circle cx="16.500" cy="16.500" r="16" fill="#6fb83f" />
        <path d="M6.500 7.500C8 13 10 20 13 27.500" fill="none" stroke="#fff" strokeWidth="3.500" strokeLinecap="round" />
        <path d="M8.500 11c1.500 6 3 9.500 7 9.500s4.500-4 2-13M18.500 9c2 6 3 11.500 6.500 11.500 2.500 0 3.500-1.500 5-2" fill="none" stroke="#fff" strokeWidth="4" />
      </svg>
    </TaskButton>
    <TaskButton $w={59} $mode="open" aria-label="Проводник">
      <svg width="34" height="30" viewBox="0 0 34 30">
        <path d="M1.500 27V4.500l1-3H13l1 3h17.500V27z" fill="#f4dc83" stroke="#c9a646" />
        <path d="M4 1h8v3H4z" fill="#fff" /><path d="M5 1h3v2H5z" fill="#2fa84a" />
        <path d="M12 4h9v3h-9z" fill="#fff" /><path d="M13 4h3v2h-3z" fill="#d33" />
        <path d="M20 6h10v3H20z" fill="#fff" /><path d="M22 6h3v2h-3z" fill="#39c" />
        <path d="M2 9h30v18H2z" fill="#fbeaa4" stroke="#dcbd5f" />
        <path d="M5.500 28.500v-9l2-2h18l2 2v9h-5v-5h-12v5z" fill="#a8daf2" stroke="#5aa5cf" />
        <path d="M9 10v10M4 15h10" stroke="#fff" strokeWidth="1" />
      </svg>
    </TaskButton>
    <TaskButton $w={59} $mode="open" aria-label="Chrome">
      <svg width="30" height="30" viewBox="0 0 30 30">
        <circle cx="15" cy="15" r="15" fill="#fbc93c" />
        <path d="M2 7.500A15 15 0 0 1 28 7.500H15L8.500 18.500z" fill="#d9453a" />
        <path d="M2 7.500A15 15 0 0 0 14 30l7-12-6-3z" fill="#3a9c50" />
        <path d="M15 8h13.300A15 15 0 0 1 14 30l7.500-12z" fill="#fbc93c" />
        <circle cx="15" cy="15" r="7" fill="#fff" />
        <circle cx="15" cy="15" r="5.500" fill="#4384f3" />
      </svg>
    </TaskButton>
    <TaskButton $w={58} $mode="idle" aria-label="Проигрыватель">
      <svg width="30" height="26" viewBox="0 0 30 26">
        <path d="M8 2h18v22H8z" fill="#78b9e2" stroke="#b9def4" />
        <path d="M5 1h18v23H5z" fill="#5fa8d8" stroke="#b9def4" />
        <path d="M1 1h18v24H1z" fill="#8ec8ec" stroke="#b9def4" />
        <circle cx="11" cy="13" r="9" fill="#ef7d1c" />
        <path d="M8 7.500v11l8-5.500z" fill="#fff" />
      </svg>
    </TaskButton>
    <TaskButton $w={59} $mode="active" aria-label="Word">
      <svg width="31" height="30" viewBox="0 0 31 30">
        <path d="M4 .5h25.500v28H.5V4z" fill="#f4f8fd" stroke="#2f5fa8" />
        <path d="M25 8h3M25 11h3M25 14h3" stroke="#8fb0dc" />
        <path d="M1 24c8-2 14-1 19-5l3 10H1z" fill="#1f58a8" />
        <path d="M5 5.500L8 19h1.500L14 8l3.500 11H19l4-13.500" fill="none" stroke="#1c4c9c" strokeWidth="3.200" />
        <path d="M18 19l6-2 3 2 2 9-9 1z" fill="#fff" stroke="#c4d2e6" />
      </svg>
    </TaskButton>
    <Tray>
      <Lang>RU</Lang>
      <IconButton aria-label="Скрытые значки"><svg width="16" height="5"><path d="M4 5h8L8 0z" fill="#fff" /></svg></IconButton>
      <Clock>21:38<br />01.04.2019</Clock>
      <ShowDesktop aria-label="Показать рабочий стол" />
    </Tray>
  </Taskbar>
);

export default function App() {
  return (
    <App_>
      <Global />
      <WindowHeader />
      <RibbonBar />
      <Workspace>
        <Corner aria-label="Табуляция">
          <span><svg width="6" height="6"><path d="M1 0v5h5" fill="none" stroke="#333" strokeWidth="2" /></svg></span>
        </Corner>
        <HRulerCell><HorizontalRuler /></HRulerCell>
        <ScrollTop>
          <SplitBar />
          <RulerToggle aria-label="Линейка">
            <svg width="12" height="12" fill="#f1f1f4" stroke="#70757d"><path d="M1.500 2.500h10v7h-10z" /><path d="M2.500.5h4v3h-4zM6.500 7.500h4v4h-4z" /></svg>
          </RulerToggle>
        </ScrollTop>
        <VRulerCell><VerticalRuler /></VRulerCell>
        <Desk><Document /></Desk>
        <VerticalScroll />
      </Workspace>
      <StatusBar />
      <TaskbarRow />
    </App_>
  );
}
